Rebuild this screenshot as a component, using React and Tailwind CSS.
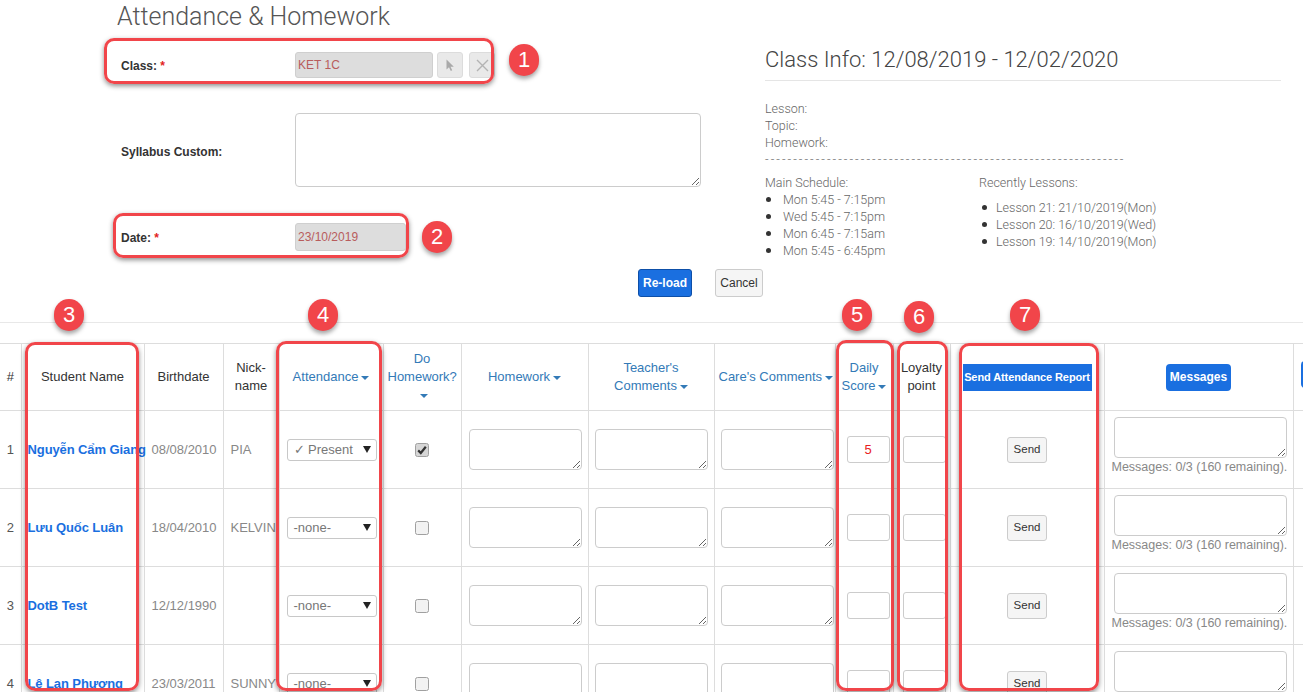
import React from "react";

const students = [
  { no: 1, name: "Nguyễn Cẩm Giang", birth: "08/08/2010", nick: "PIA", att: "✓ Present", hw: true, score: "5" },
  { no: 2, name: "Lưu Quốc Luân", birth: "18/04/2010", nick: "KELVIN", att: "-none-", hw: false, score: "" },
  { no: 3, name: "DotB Test", birth: "12/12/1990", nick: "", att: "-none-", hw: false, score: "" },
  { no: 4, name: "Lê Lan Phương", birth: "23/03/2011", nick: "SUNNY", att: "-none-", hw: false, score: "" },
];

const schedule = ["Mon 5:45 - 7:15pm", "Wed 5:45 - 7:15pm", "Mon 6:45 - 7:15am", "Mon 5:45 - 6:45pm"];
const recent = ["Lesson 21: 21/10/2019(Mon)", "Lesson 20: 16/10/2019(Wed)", "Lesson 19: 14/10/2019(Mon)"];

function Caret() {
  return (
    <span className="inline-block align-middle ml-[3px] w-0 h-0 border-x-[4px] border-x-transparent border-t-[4px] border-t-current" />
  );
}

function Checkbox({ checked }) {
  return (
    <svg width="14" height="14" viewBox="0 0 14 14" className="inline-block">
      <rect x="0.5" y="0.5" width="13" height="13" rx="2" fill={checked ? "#d6d6d6" : "#f2f2f2"} stroke="#a0a0a0" />
      {checked && <path d="M3.2 7.4 L5.8 10 L10.8 3.8" fill="none" stroke="#333" strokeWidth="2.2" />}
    </svg>
  );
}

function Box({ className }) {
  return (
    <div
      className={`absolute border-[3px] border-[#f1454a] rounded-[10px] shadow-[0_2px_5px_rgba(0,0,0,0.45)] pointer-events-none ${className}`}
    />
  );
}

function Badge({ n, className }) {
  return (
    <div
      className={`absolute w-[30px] h-[32px] rounded-full bg-[#f1454a] text-white text-[22px] leading-none flex items-center justify-center shadow-[0_3px_4px_rgba(0,0,0,0.35)] ${className}`}
    >
      {n}
    </div>
  );
}

const th = "border-l border-[#dddddd] align-middle text-center text-[13px] leading-[18px] font-normal px-[4px]";
const td = "border-l border-[#dddddd] align-middle text-[13px]";
const ta = "block w-[113px] h-[41px] ml-[6px] border border-[#cccccc] rounded-[4px] bg-white";

export default function App() {
  return (
    <div className="relative w-[1303px] h-[692px] overflow-hidden bg-white text-[#333] font-['Liberation_Sans',Arial,sans-serif]">
      {/* top area */}
      <div className="flex">
        <div className="w-[765px] shrink-0">
          <h1 className="pl-[117px] pt-[2px] text-[25px] leading-[30px] font-light text-[#555] font-['Roboto',sans-serif]">
            Attendance &amp; Homework
          </h1>
          <div className="pl-[121px] mt-[20px]">
            <div className="flex items-center h-[26px]">
              <label className="w-[174px] text-[12px] font-bold pt-[2px]">
                Class: <span className="text-[#e21d1d]">*</span>
              </label>
              <div className="w-[138px] h-[26px] bg-[#dddddd] border border-[#cfcfcf] rounded-[3px] text-[12px] text-[#b85c5c] flex items-center pl-[2px]">
                KET 1C
              </div>
              <div className="ml-[4px] w-[26px] h-[26px] bg-[#e9e9e9] border border-[#dcdcdc] rounded-[3px] flex items-center justify-center">
                <svg width="10" height="13" viewBox="0 0 10 13">
                  <path d="M1.5 0.5 L1.5 10.5 L4 8.3 L5.8 12 L7.2 11.3 L5.5 7.7 L8.8 7.7 Z" fill="#a9a9a9" />
                </svg>
              </div>
              <div className="ml-[6px] w-[26px] h-[26px] bg-[#e9e9e9] border border-[#dcdcdc] rounded-[3px] flex items-center justify-center">
                <svg width="13" height="13" viewBox="0 0 13 13">
                  <path d="M1 1 L12 12 M12 1 L1 12" stroke="#b3b3b3" strokeWidth="1.4" />
                </svg>
              </div>
            </div>
            <div className="flex items-center mt-[35px]">
              <label className="w-[174px] text-[12px] font-bold pt-[3px]">Syllabus Custom:</label>
              <textarea readOnly className="w-[406px] h-[74px] border border-[#cccccc] rounded-[4px] bg-white" />
            </div>
            <div className="flex items-center mt-[36px] h-[28px]">
              <label className="w-[174px] text-[12px] font-bold pt-[2px]">
                Date: <span className="text-[#e21d1d]">*</span>
              </label>
              <div className="w-[111px] h-[28px] bg-[#dddddd] border border-[#cfcfcf] rounded-[3px] text-[12px] text-[#b85c5c] flex items-center pl-[2px]">
                23/10/2019
              </div>
            </div>
            <div className="flex mt-[18px] ml-[517px] gap-[23px]">
              <button className="w-[54px] h-[28px] bg-[#1a6fe0] border border-[#0d4fa8] rounded-[3px] text-white text-[12px] font-bold">
                Re-load
              </button>
              <button className="w-[48px] h-[28px] bg-[#f5f5f5] border border-[#cccccc] rounded-[3px] text-[#333] text-[12px]">
                Cancel
              </button>
            </div>
          </div>
        </div>

        <div className="w-[516px] pt-[47px] font-['Roboto',sans-serif] font-light">
          <div className="text-[22px] leading-[26px] text-[#444]">Class Info: 12/08/2019 - 12/02/2020</div>
          <div className="mt-[7px] border-t border-[#e5e5e5]" />
          <div className="mt-[19px] text-[12.5px] leading-[17px] text-[#666]">
            <div>Lesson:</div>
            <div>Topic:</div>
            <div>Homework:</div>
            <div className="whitespace-nowrap tracking-[2.05px]">{"-".repeat(64)}</div>
            <div className="flex mt-[6px]">
              <div className="w-[214px]">
                <div>Main Schedule:</div>
                <ul>
                  {schedule.map((s) => (
                    <li key={s} className="flex items-center">
                      <span className="ml-[1px] mr-[12px] w-[5px] h-[5px] rounded-full bg-[#333]" />
                      {s}
                    </li>
                  ))}
                </ul>
              </div>
              <div>
                <div>Recently Lessons:</div>
                <ul className="mt-[8px]">
                  {recent.map((s) => (
                    <li key={s} className="flex items-center">
                      <span className="ml-[3px] mr-[9px] w-[5px] h-[5px] rounded-full bg-[#333]" />
                      {s}
                    </li>
                  ))}
                </ul>
              </div>
            </div>
          </div>
        </div>
      </div>

      <div className="mt-[25px] border-t border-[#e8e8e8]" />

      {/* table */}
      <table className="mt-[20px] table-fixed border-collapse w-[1443px] border-t border-[#dddddd]">
        <colgroup>
          <col className="w-[21px]" />
          <col className="w-[123px]" />
          <col className="w-[79px]" />
          <col className="w-[56px]" />
          <col className="w-[104px]" />
          <col className="w-[78px]" />
          <col className="w-[127px]" />
          <col className="w-[126px]" />
          <col className="w-[121px]" />
          <col className="w-[58px]" />
          <col className="w-[57px]" />
          <col className="w-[154px]" />
          <col className="w-[189px]" />
          <col className="w-[150px]" />
        </colgroup>
        <thead>
          <tr className="h-[67px] border-b border-[#dddddd]">
            <th className="align-middle text-center text-[13px] font-normal">#</th>
            <th className={th}>Student Name</th>
            <th className={th}>Birthdate</th>
            <th className={th}>
              Nick-
              <br />
              name
            </th>
            <th className={`${th} text-[#337ab7] whitespace-nowrap`}>
              Attendance
              <Caret />
            </th>
            <th className={`${th} text-[#337ab7]`}>
              Do
              <br />
              Homework?
              <br />
              <Caret />
            </th>
            <th className={`${th} text-[#337ab7]`}>
              Homework
              <Caret />
            </th>
            <th className={`${th} text-[#337ab7]`}>
              Teacher's
              <br />
              Comments
              <Caret />
            </th>
            <th className={`${th} text-[#337ab7] whitespace-nowrap`}>
              Care's Comments
              <Caret />
            </th>
            <th className={`${th} text-[#337ab7]`}>
              Daily
              <br />
              Score
              <Caret />
            </th>
            <th className={th}>
              Loyalty
              <br />
              point
            </th>
            <th className={`${th} px-[12px]`}>
              <div className="h-[27px] bg-[#1a6fe0] text-white text-[11px] font-bold flex items-center justify-center whitespace-nowrap tracking-[-0.1px]">
                Send Attendance Report
              </div>
            </th>
            <th className={th}>
              <button className="w-[65px] h-[27px] bg-[#1a6fe0] rounded-[4px] text-white text-[12px] font-bold">
                Messages
              </button>
            </th>
            <th className={`${th} text-left pl-[7px]`}>
              <button className="w-[90px] h-[27px] bg-[#1a6fe0] rounded-[4px] text-white text-[12px] font-bold" />
            </th>
          </tr>
        </thead>
        <tbody>
          {students.map((s) => (
            <tr key={s.no} className="h-[78px] border-b border-[#dddddd]">
              <td className="align-middle text-center text-[13px] text-[#555]">{s.no}</td>
              <td className={`${td} pl-[6px] font-bold text-[12px] tracking-[-0.1px] text-[#1a6fe0] whitespace-nowrap`}>
                {s.name}
              </td>
              <td className={`${td} pl-[7px] text-[#888]`}>{s.birth}</td>
              <td className={`${td} pl-[7px] text-[12.5px] text-[#888] whitespace-nowrap`}>{s.nick}</td>
              <td className={`${td} pl-[7px]`}>
                <div className="w-[90px] h-[22px] border border-[#c8c8c8] rounded-[3px] bg-white flex items-center justify-between pl-[6px] pr-[5px] text-[13px] text-[#777]">
                  <span>{s.att}</span>
                  <svg width="8" height="7" viewBox="0 0 8 7">
                    <path d="M0 0 L8 0 L4 7 Z" fill="#222" />
                  </svg>
                </div>
              </td>
              <td className={`${td} text-center`}>
                <Checkbox checked={s.hw} />
              </td>
              <td className={td}>
                <textarea readOnly className={`${ta} ml-[7px]`} />
              </td>
              <td className={td}>
                <textarea readOnly className={ta} />
              </td>
              <td className={td}>
                <textarea readOnly className={ta} />
              </td>
              <td className={td}>
                <div className="w-[43px] h-[27px] ml-[11px] border border-[#cccccc] rounded-[3px] bg-white flex items-center justify-center text-[13px] text-[#e82020]">
                  {s.score}
                </div>
              </td>
              <td className={td}>
                <div className="w-[43px] h-[27px] ml-[9px] border border-[#cccccc] rounded-[3px] bg-white" />
              </td>
              <td className={`${td} text-center`}>
                <button className="w-[40px] h-[26px] bg-[#f5f5f5] border border-[#cccccc] rounded-[3px] text-[11.5px] text-[#333]">
                  Send
                </button>
              </td>
              <td className={`${td} pl-[7px] pb-[7px]`}>
                <textarea readOnly className="block ml-[2px] w-[173px] h-[41px] border border-[#cccccc] rounded-[4px] bg-white" />
                <div className="mt-[1px] text-[12.5px] leading-[16px] text-[#888] whitespace-nowrap">
                  Messages: 0/3 (160 remaining).
                </div>
              </td>
              <td className={td} />
            </tr>
          ))}
        </tbody>
      </table>

      {/* annotations */}
      <Box className="left-[104px] top-[38px] w-[390px] h-[46px]" />
      <Box className="left-[113px] top-[213px] w-[296px] h-[45px]" />
      <Box className="left-[25px] top-[342px] w-[114px] h-[349px]" />
      <Box className="left-[276px] top-[341px] w-[106px] h-[350px]" />
      <Box className="left-[836px] top-[340px] w-[58px] h-[351px]" />
      <Box className="left-[897px] top-[341px] w-[51px] h-[350px]" />
      <Box className="left-[959px] top-[343px] w-[140px] h-[348px]" />

      <Badge n="1" className="left-[509px] top-[44px]" />
      <Badge n="2" className="left-[422px] top-[221px]" />
      <Badge n="3" className="left-[54px] top-[299px]" />
      <Badge n="4" className="left-[308px] top-[299px]" />
      <Badge n="5" className="left-[842px] top-[299px]" />
      <Badge n="6" className="left-[904px] top-[301px]" />
      <Badge n="7" className="left-[1010px] top-[299px]" />
    </div>
  );
}
